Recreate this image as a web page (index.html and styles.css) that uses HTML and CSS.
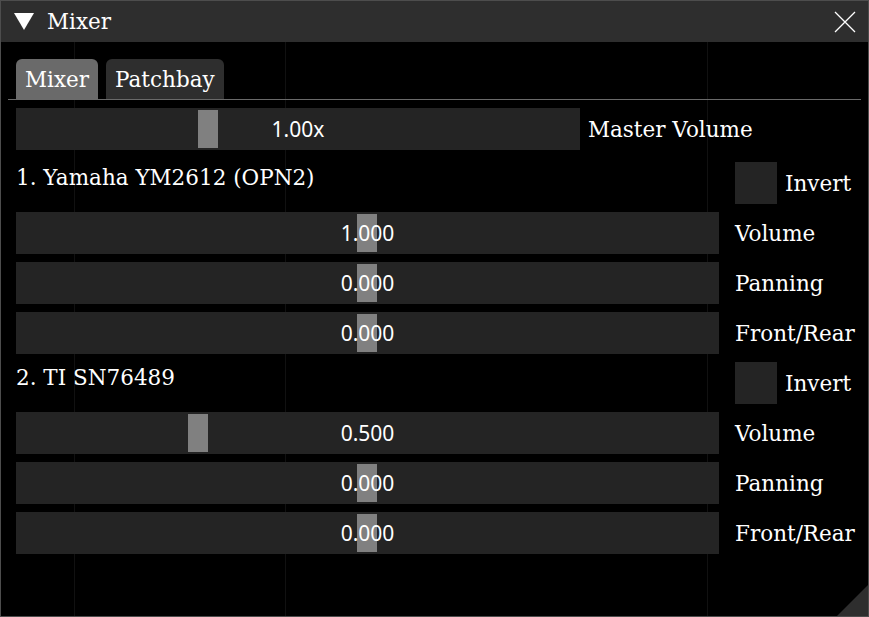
FILE: index.html
```html
<!DOCTYPE html>
<html>
<head>
<meta charset="utf-8">
<link rel="stylesheet" href="styles.css">
</head>
<body>
<div class="window">
  <div class="titlebar">
    <svg class="collapse" width="20" height="18" viewBox="0 0 20 18"><polygon points="0,0 20,0 10,17" fill="#fff"/></svg>
    <span class="title">Mixer</span>
    <svg class="close" width="22" height="22" viewBox="0 0 22 22"><path d="M1 1 L21 21 M21 1 L1 21" stroke="#fff" stroke-width="1.3" fill="none"/></svg>
  </div>
  <div class="body">
    <div class="tabbar">
      <div class="tab active">Mixer</div>
      <div class="tab">Patchbay</div>
    </div>
    <div class="stack">
      <div class="master">
        <div class="slider master-slider">
          <div class="grab" style="left:182px"></div>
          <span class="val">1.00x</span>
        </div>
        <span class="label">Master Volume</span>
      </div>

      <div class="chip">
        <div class="row head">
          <span class="name">1. Yamaha YM2612 (OPN2)</span>
          <div class="check"><span class="box"></span><span class="label">Invert</span></div>
        </div>
        <div class="row">
          <div class="slider"><div class="grab" style="left:341px"></div><span class="val">1.000</span></div>
          <span class="label">Volume</span>
        </div>
        <div class="row">
          <div class="slider"><div class="grab" style="left:341px"></div><span class="val">0.000</span></div>
          <span class="label">Panning</span>
        </div>
        <div class="row">
          <div class="slider"><div class="grab" style="left:341px"></div><span class="val">0.000</span></div>
          <span class="label">Front/Rear</span>
        </div>
      </div>

      <div class="chip">
        <div class="row head">
          <span class="name">2. TI SN76489</span>
          <div class="check"><span class="box"></span><span class="label">Invert</span></div>
        </div>
        <div class="row">
          <div class="slider"><div class="grab" style="left:172px"></div><span class="val">0.500</span></div>
          <span class="label">Volume</span>
        </div>
        <div class="row">
          <div class="slider"><div class="grab" style="left:341px"></div><span class="val">0.000</span></div>
          <span class="label">Panning</span>
        </div>
        <div class="row">
          <div class="slider"><div class="grab" style="left:341px"></div><span class="val">0.000</span></div>
          <span class="label">Front/Rear</span>
        </div>
      </div>
    </div>
    <div class="grip"></div>
  </div>
</div>
</body>
</html>
```
FILE: styles.css
```css
html, body {
  margin: 0;
  padding: 0;
  background: #000;
}
.window {
  width: 869px;
  height: 617px;
  box-sizing: border-box;
  border: 1px solid #4d4d4d;
  display: flex;
  flex-direction: column;
  font-family: "DejaVu Serif", serif;
  font-size: 21.5px;
  color: #fff;
  background: #000;
}
.titlebar {
  height: 41px;
  flex: none;
  background: #2e2e2e;
  display: flex;
  align-items: center;
  padding-left: 13px;
  padding-right: 12px;
}
.collapse {
  margin-top: 1px;
}
.title {
  margin-left: 13px;
  flex: 1;
  line-height: 41px;
}
.body {
  flex: 1;
  position: relative;
  padding: 17px 15px 0 15px;
  background-color: #000;
  background-image:
    linear-gradient(#111, #111),
    linear-gradient(#111, #111),
    linear-gradient(#111, #111);
  background-size: 1px 100%;
  background-repeat: no-repeat;
  background-position: 73px 0, 284px 0, 706px 0;
}
.tabbar {
  display: flex;
  gap: 8px;
  margin: 0 -8px;
  padding-left: 8px;
  height: 40px;
  border-bottom: 1px solid #6a6a6a;
}
.tab {
  height: 40px;
  padding: 0 9px;
  background: #2e2e2e;
  border-radius: 6px 6px 0 0;
  display: flex;
  align-items: center;
}
.tab.active {
  background: #6a6a6a;
}
.stack {
  margin-top: 8px;
  display: flex;
  flex-direction: column;
  gap: 8px;
}
.master {
  display: flex;
  align-items: center;
  gap: 8px;
  margin-bottom: 4px;
}
.master-slider {
  width: 564px;
}
.chip {
  display: flex;
  flex-direction: column;
  gap: 8px;
}
.row {
  display: grid;
  grid-template-columns: 703px 1fr;
  column-gap: 16px;
  align-items: center;
  height: 42px;
}
.head {
  align-items: start;
}
.name {
  line-height: 32px;
}
.check {
  display: flex;
  align-items: center;
  gap: 8px;
}
.box {
  width: 42px;
  height: 42px;
  background: #242424;
}
.slider {
  position: relative;
  height: 42px;
  background: #242424;
  display: flex;
  align-items: center;
  justify-content: center;
}
.grab {
  position: absolute;
  top: 2px;
  width: 20px;
  height: 38px;
  background: #808080;
}
.val {
  position: relative;
  font-family: "Noto Sans", sans-serif;
  font-size: 21px;
}
.label {
  white-space: nowrap;
}
.grip {
  position: absolute;
  right: 0;
  bottom: 0;
  width: 0;
  height: 0;
  border-style: solid;
  border-width: 0 0 31px 31px;
  border-color: transparent transparent #2e2e2e transparent;
}
```
